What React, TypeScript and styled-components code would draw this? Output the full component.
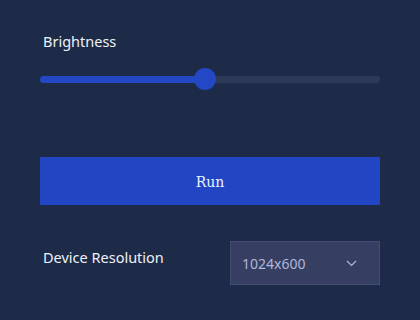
import styled, { createGlobalStyle } from 'styled-components'

const Global = createGlobalStyle`
  html, body {
    margin: 0;
    padding: 0;
    background: #1e2b48;
  }
  body {
    font-family: "Noto Sans", "Open Sans", sans-serif;
  }
`

const Panel = styled.div`
  width: 420px;
  height: 320px;
  box-sizing: border-box;
  padding: 31px 40px 0 40px;
  background: #1e2b48;
  display: flex;
  flex-direction: column;
`

const Label = styled.div`
  color: #eef1f8;
  font-size: 14.5px;
  padding-left: 3px;
`

const SliderWrap = styled.div`
  margin-top: 16px;
  height: 24px;
  display: flex;
  align-items: center;
  position: relative;
`

const Track = styled.div`
  width: 100%;
  height: 7px;
  border-radius: 4px;
  background: #2d3957;
  overflow: hidden;
`

const Fill = styled.div`
  height: 100%;
  background: #2447c6;
`

const Thumb = styled.div`
  position: absolute;
  top: 1px;
  width: 22px;
  height: 22px;
  margin-left: -11px;
  border-radius: 50%;
  background: #2447c6;
`

const RunButton = styled.button`
  margin-top: 66px;
  height: 48px;
  width: 100%;
  border: none;
  padding-top: 3px;
  background: #2245c4;
  color: #eaf3ff;
  font-family: "DejaVu Serif", "Liberation Serif", serif;
  font-size: 14px;
  cursor: pointer;
`

const Row = styled.div`
  margin-top: 36px;
  display: flex;
  justify-content: space-between;
  align-items: flex-start;
`

const RowLabel = styled(Label)`
  margin-top: 6px;
`

const Select = styled.div`
  width: 150px;
  height: 44px;
  box-sizing: border-box;
  background: #363e62;
  border: 1px solid #434c74;
  display: flex;
  align-items: center;
  justify-content: space-between;
  padding: 0 22px 0 11px;
  color: #b0b8d8;
  font-size: 14px;
`

const value = 48.5

export default function App() {
  return (
    <Panel>
      <Global />
      <Label>Brightness</Label>
      <SliderWrap>
        <Track>
          <Fill style={{ width: `${value}%` }} />
        </Track>
        <Thumb style={{ left: `${value}%` }} />
      </SliderWrap>
      <RunButton>Run</RunButton>
      <Row>
        <RowLabel>Device Resolution</RowLabel>
        <Select>
          <span>1024x600</span>
          <svg width="11" height="7" viewBox="0 0 11 7" fill="none">
            <path d="M1 1l4.5 4.5L10 1" stroke="#b0b8d8" strokeWidth="1.2" />
          </svg>
        </Select>
      </Row>
    </Panel>
  )
}
